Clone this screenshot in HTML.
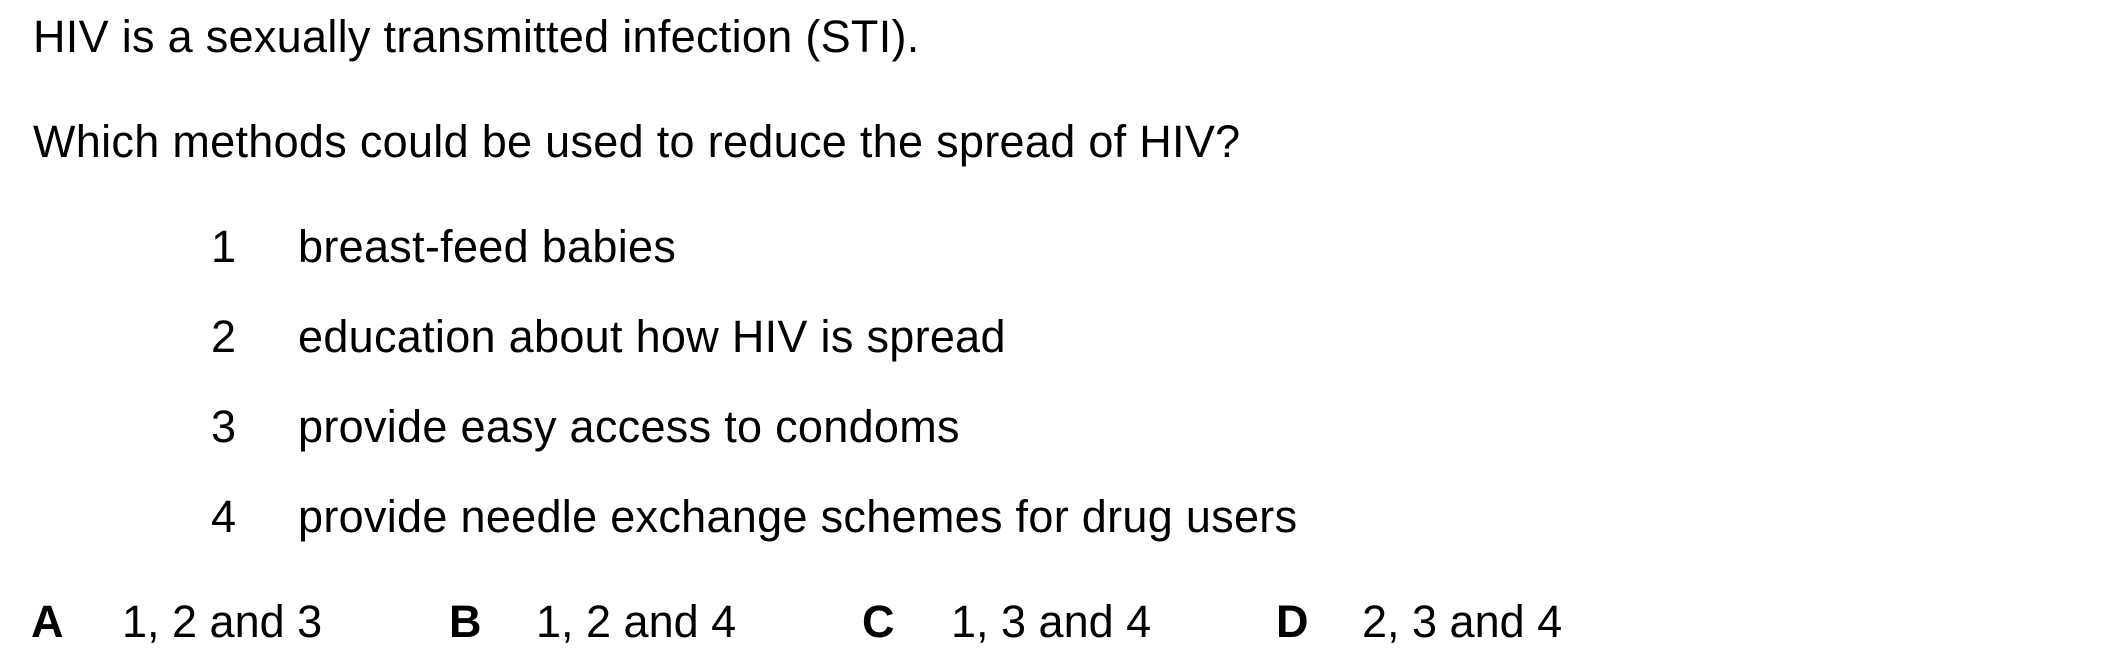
<!DOCTYPE html>
<html><head><meta charset="utf-8"><style>
html,body{margin:0;padding:0;background:#fff;width:2104px;height:668px;overflow:hidden}
div{position:absolute;font-family:"Liberation Sans",Arial,sans-serif;font-size:45px;letter-spacing:0.3px;line-height:50px;color:#000;white-space:nowrap}
div.a{letter-spacing:0}
b{font-weight:bold}
</style></head><body>
<div style="left:33px;top:12px">HIV is a sexually transmitted infection (STI).</div>
<div style="left:33px;top:117px">Which methods could be used to reduce the spread of HIV?</div>
<div style="left:211px;top:222px">1</div><div style="left:298px;top:222px">breast-feed babies</div>
<div style="left:211px;top:312px">2</div><div style="left:298px;top:312px">education about how HIV is spread</div>
<div style="left:211px;top:402px">3</div><div style="left:298px;top:402px">provide easy access to condoms</div>
<div style="left:211px;top:492px">4</div><div style="left:298px;top:492px">provide needle exchange schemes for drug users</div>
<div class="a" style="left:31px;top:597px"><b>A</b></div><div class="a" style="left:122px;top:597px">1, 2 and 3</div>
<div class="a" style="left:449px;top:597px"><b>B</b></div><div class="a" style="left:536px;top:597px">1, 2 and 4</div>
<div class="a" style="left:862px;top:597px"><b>C</b></div><div class="a" style="left:951px;top:597px">1, 3 and 4</div>
<div class="a" style="left:1276px;top:597px"><b>D</b></div><div class="a" style="left:1362px;top:597px">2, 3 and 4</div>
</body></html>
